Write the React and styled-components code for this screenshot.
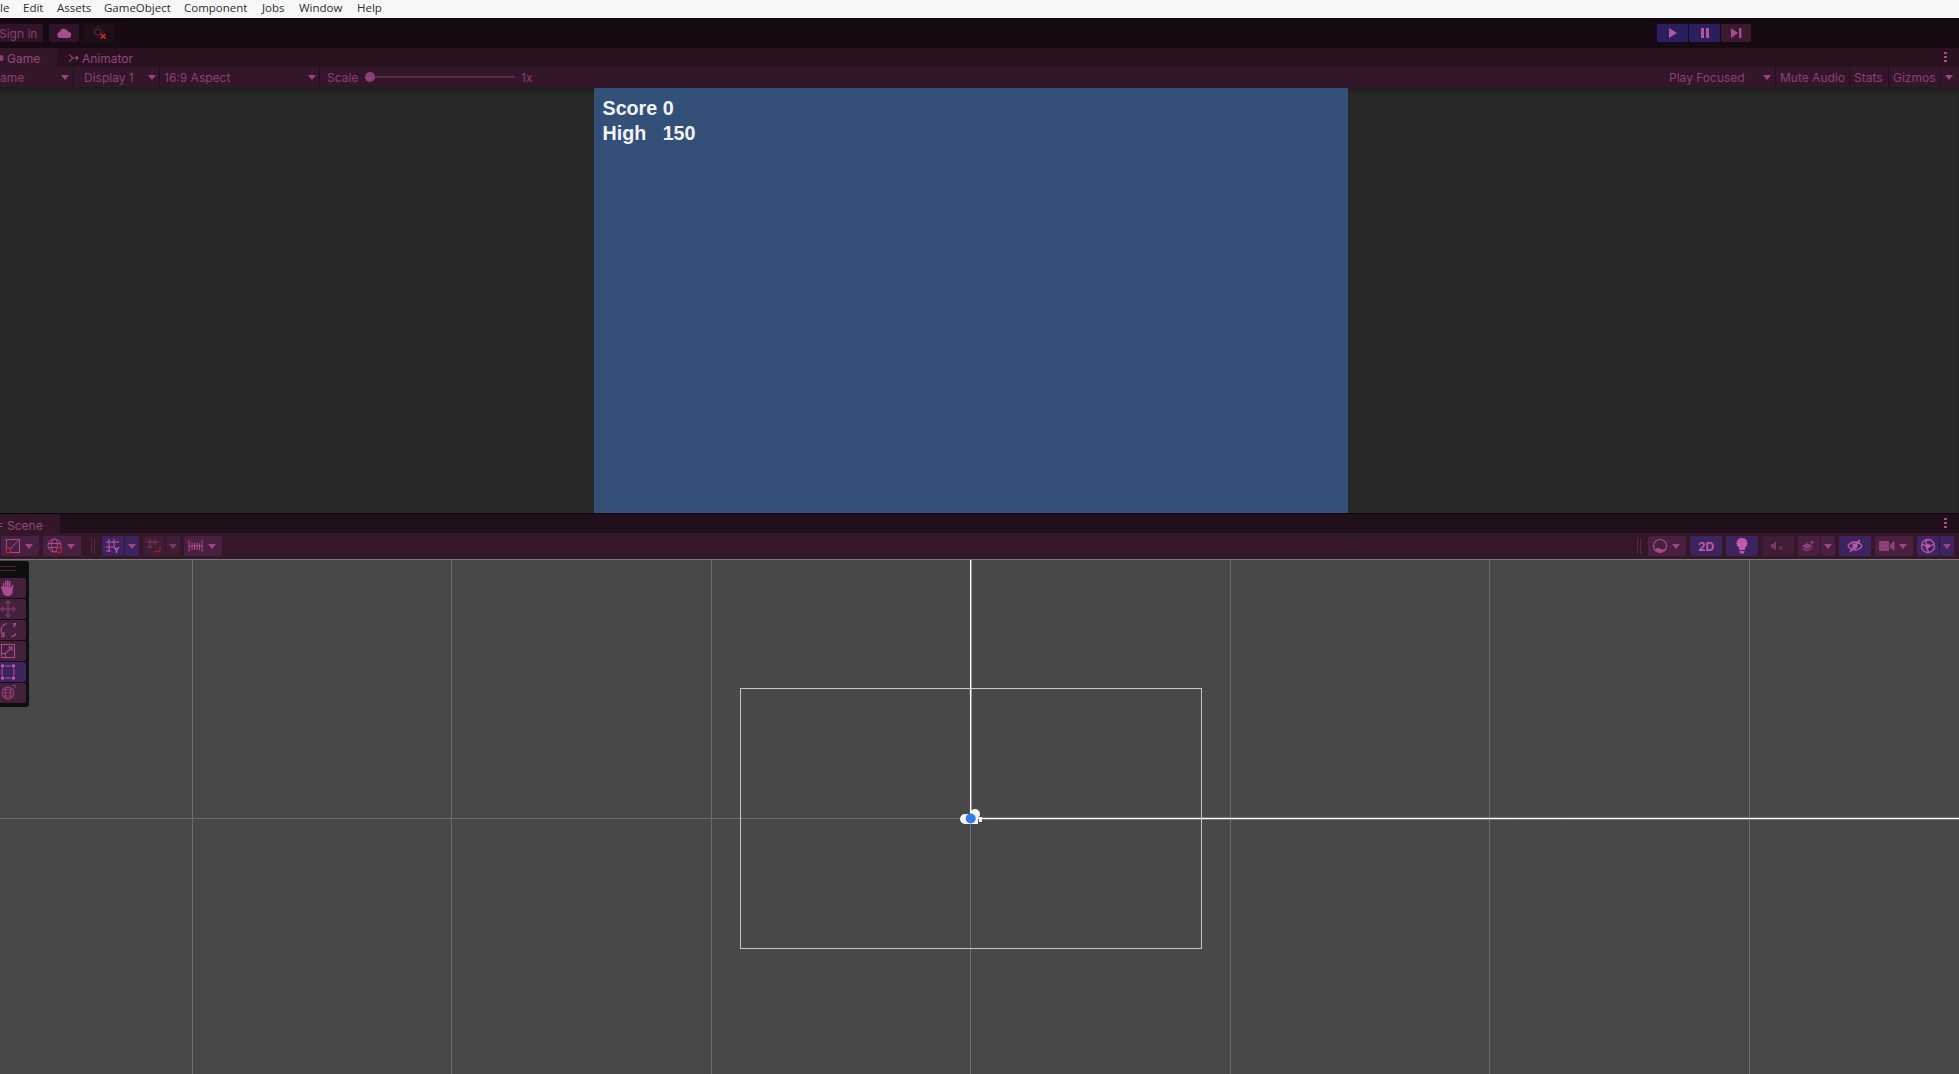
import React from "react";
import styled, { createGlobalStyle } from "styled-components";

const PINK = "#a84c8e";
const PINK_DIM = "#7a3a66";
const RED = "#d02a2a";

const Global = createGlobalStyle`
  html, body { margin: 0; padding: 0; background: #484848; }
  #root { width: 1959px; height: 1074px; overflow: hidden; }
`;

const Page = styled.div`
  width: 1959px; height: 1074px; overflow: hidden;
  display: flex; flex-direction: column;
  font-family: Inter, "Liberation Sans", sans-serif; font-size: 12px;
  color: ${PINK};
`;

const MenuBar = styled.div`
  height: 15px; padding-bottom: 3px; background: #f8f7f8; flex: none;
  display: flex; align-items: center;
  font-family: "Open Sans", "Noto Sans", sans-serif; font-size: 11.5px; color: #2c2c2c;
  overflow: hidden;
`;
const MenuItem = styled.span`
  flex: none; width: ${p => p.$w}px;
`;

const MainToolbar = styled.div`
  height: 30px; flex: none; background: #170a12;
  display: flex; align-items: center;
`;
const TopButton = styled.div`
  height: 18px; width: ${p => p.$w}px; margin-left: ${p => p.$ml || 0}px; flex: none;
  background: ${p => p.$bg || "#2f1326"};
  display: flex; align-items: center; justify-content: ${p => p.$start ? "flex-start" : "center"};
  border-radius: 1px; color: #8d4077; overflow: hidden; white-space: nowrap;
`;
const Clipped = styled.span` margin-left: -1px; `;

const TabBar = styled.div`
  height: ${p => p.$h}px; flex: none; background: ${p => p.$bg};
  display: flex; align-items: stretch; position: relative;
`;
const Tab = styled.div`
  width: ${p => p.$w}px; flex: none; display: flex; align-items: center; gap: 3px;
  background: ${p => p.$active ? "#331628" : "transparent"};
  padding: ${p => p.$pt || 0}px 0 0 ${p => p.$pl || 0}px; box-sizing: border-box;
  border-top-right-radius: 2px; color: #974781; white-space: nowrap;
  font-size: 12px;
`;
const Kebab = styled.svg` position: absolute; right: 12px; top: ${p => p.$top}px; `;

const GameToolbar = styled.div`
  height: 21px; flex: none; background: #33162a; display: flex; align-items: center;
  border-bottom: 1px solid #1e1e1e; box-sizing: border-box;
`;
const Cell = styled.div`
  width: ${p => p.$w}px; flex: none; box-sizing: border-box; height: 100%;
  display: flex; align-items: center; justify-content: space-between;
  padding: 0 ${p => p.$pr ?? 5}px 0 ${p => p.$pl ?? 5}px;
  border-right: ${p => p.$line ? "1px solid #230e1c" : "none"};
  color: #8d4077; white-space: nowrap; overflow: hidden;
`;
const Grow = styled.div` flex: 1; `;
const Arrow = styled.i`
  display: block; flex: none; width: 0; height: 0;
  border-left: 4px solid transparent; border-right: 4px solid transparent;
  border-top: 5px solid ${p => p.$c || "#9a4682"};
`;
const SliderWrap = styled.div`
  width: 150px; height: 2px; flex: none; position: relative;
  background: #5a2a4c;
`;
const Knob = styled.div`
  position: absolute; left: 0; top: -4px; width: 10px; height: 10px; border-radius: 50%; background: #8d4077;
`;

const GameView = styled.div`
  height: 425px; flex: none; background: #282828;
  display: flex; justify-content: center;
  box-shadow: inset 0 6px 6px -5px #161616;
`;
const GameCanvas = styled.div`
  width: 754px; margin-right: 18px; box-sizing: border-box; background: #325078;
  padding: 8px 9px; color: #f2f4f7;
  font-family: "Liberation Sans", Arial, sans-serif; font-weight: 700; font-size: 19.7px; line-height: 25px;
  white-space: pre;
`;

const Divider = styled.div` height: 1px; flex: none; background: #0e060b; `;

const SceneToolbar = styled.div`
  height: 27px; flex: none; background: #35172a; display: flex; align-items: center;
  border-bottom: 1px solid #7a7a7a; box-sizing: border-box; padding-left: 1px; padding-right: 5px;
`;
const ToolGroup = styled.div`
  display: flex; flex: none; gap: 1px; margin-left: ${p => p.$ml ?? 4}px;
`;
const ToolButton = styled.div`
  width: ${p => p.$w}px; height: 20px; flex: none; border-radius: 2px;
  background: ${p => p.$on ? "#3d2460" : p.$dim ? "#401c35" : "#4a2040"};
  display: flex; align-items: center; justify-content: ${p => p.$between ? "space-between" : "center"};
  padding: 0 ${p => p.$between ? 6 : 0}px 0 ${p => p.$between ? 4 : 0}px; box-sizing: border-box;
  font-weight: 700; font-size: 12px; color: #c05aa8;
`;
const Grip = styled.div`
  width: 4px; height: 16px; flex: none; margin-left: ${p => p.$ml}px; box-sizing: border-box;
  border-left: 1px solid #54284a; border-right: 1px solid #54284a;
`;

const SceneView = styled.div`
  flex: 1; position: relative; background: #484848; overflow: hidden;
`;
const SceneDrawing = styled.svg` display: block; `;
const ToolsOverlay = styled.div`
  position: absolute; left: 0; top: 1px; width: 29px; height: 146px; box-sizing: border-box;
  background: #0f0f0f; border-radius: 0 3px 3px 0;
  display: flex; flex-direction: column; gap: 1px; padding: 0 3px 4px 0;
`;
const Handle = styled.div`
  height: 16px; flex: none; display: flex; flex-direction: column;
  gap: 3px; padding: 5px 10px 0 0; box-sizing: border-box;
`;
const HandleLine = styled.div` height: 1px; background: #4a2540; `;
const OverlayButton = styled.div`
  height: 20px; flex: none; background: ${p => p.$on ? "#3d2460" : "#44203a"};
  display: flex; align-items: center; border-radius: 0 2px 2px 0;
`;

const Ico = ({ children, w = 16, h = 16, vb = "0 0 16 16", c = PINK, sw = 1 }) => (
  <svg width={w} height={h} viewBox={vb} fill="none" stroke={c} strokeWidth={sw}>{children}</svg>
);

const menu = [["le", 23], ["Edit", 34], ["Assets", 47], ["GameObject", 80], ["Component", 78], ["Jobs", 37], ["Window", 58], ["Help", 40]];

const bigGrid = [192.5, 451.5, 711.5, 970.5, 1230.5, 1489.5, 1749.5];
const fine = Array.from({ length: 76 }, (_, i) => 10 + i * 25.95);

const KebabDots = ({ top }) => (
  <Kebab $top={top} width="3" height="10" viewBox="0 0 3 10"><path fill="#a84c8e" d="M0 0h3v2H0zM0 4h3v2H0zM0 8h3v2H0z" /></Kebab>
);

export default function App() {
  return (
    <Page>
      <Global />
      <MenuBar>
        {menu.map(([t, w]) => <MenuItem key={t} $w={w}>{t}</MenuItem>)}
      </MenuBar>

      <MainToolbar>
        <TopButton $w={43} $start><Clipped>Sign in</Clipped></TopButton>
        <TopButton $w={30} $ml={6}>
          <svg width="14" height="10" viewBox="0 0 14 10"><path fill="#a84c8e" d="M3 10a3 3 0 0 1-.5-5.9A4.5 4.5 0 0 1 11 3.6 3.2 3.2 0 0 1 11 10z" /></svg>
        </TopButton>
        <TopButton $w={30} $ml={5} $bg="#1f0e19">
          <svg width="16" height="14" viewBox="0 0 16 14" fill="none">
            <circle cx="7" cy="6" r="3" stroke="#5a2a4c" />
            <path d="M7 0v1.5M7 10.5V12M1 6h1.5M11.5 6H13M2.8 1.8l1 1M10.2 9.2l1 1M11.2 1.8l-1 1" stroke="#5a2a4c" />
            <path d="M10 8l4.5 4.5M14.5 8L10 12.5" stroke={RED} strokeWidth="1.6" />
          </svg>
        </TopButton>
        <Grow />
        <TopButton $w={31} $bg="#2b1e5e">
          <svg width="10" height="12" viewBox="0 0 10 12"><path fill="#b5559c" d="M1 1l8 5-8 5z" /></svg>
        </TopButton>
        <TopButton $w={31} $ml={1} $bg="#2b1e5e">
          <svg width="10" height="10" viewBox="0 0 10 10"><path fill="#b5559c" d="M1 0h3v10H1zM6 0h3v10H6z" /></svg>
        </TopButton>
        <TopButton $w={30} $ml={1} $bg="#3a1a2e">
          <svg width="11" height="10" viewBox="0 0 11 10"><path fill="#a84c8e" d="M0 0l7 5-7 5zM8 0h2.4v10H8z" /></svg>
        </TopButton>
        <TopButton $w={208} $bg="transparent" />
      </MainToolbar>

      <TabBar $h={19} $bg="#2a1120">
        <Tab $w={57} $active $pt={1}>
          <svg width="4" height="8" viewBox="0 0 4 8"><circle cx="0.5" cy="4" r="3" fill="#8d4077" /></svg>
          Game
        </Tab>
        <Tab $w={90} $pl={11} $pt={1}>
          <svg width="11" height="10" viewBox="0 0 11 10" fill="none" stroke="#974781" strokeWidth="1.1">
            <path d="M1 1l3.5 4L1 9M4.5 5H10M8 3l2 2-2 2" />
          </svg>
          Animator
        </Tab>
        <KebabDots top={4} />
      </TabBar>

      <GameToolbar>
        <Cell $w={74} $pl={0} $pr={4} $line><span>ame</span><Arrow /></Cell>
        <Cell $w={86} $pl={10} $pr={3} $line><span>Display 1</span><Arrow /></Cell>
        <Cell $w={160} $pl={4} $pr={3} $line><span>16:9 Aspect</span><Arrow /></Cell>
        <Cell $w={45} $pl={7} $pr={0}><span>Scale</span></Cell>
        <SliderWrap><Knob /></SliderWrap>
        <Cell $w={40} $pl={6}><span>1x</span></Cell>
        <Grow />
        <Cell $w={110} $pl={3} $pr={4} $line><span>Play Focused</span><Arrow /></Cell>
        <Cell $w={74} $pl={4} $pr={2} $line><span>Mute Audio</span></Cell>
        <Cell $w={39} $pl={4} $pr={2} $line><span>Stats</span></Cell>
        <Cell $w={52} $pl={4} $pr={2} $line><span>Gizmos</span></Cell>
        <Cell $w={18} $pl={4} $pr={4}><Arrow /></Cell>
      </GameToolbar>

      <GameView>
        <GameCanvas>{"Score 0\nHigh   150"}</GameCanvas>
      </GameView>

      <Divider />

      <TabBar $h={19} $bg="#220f1c">
        <Tab $w={60} $active $pt={3}>
          <svg width="4" height="9" viewBox="0 0 4 9" fill="none" stroke="#8d4077"><path d="M0 2.5h2.5M0 5.5h2.5" /></svg>
          Scene
        </Tab>
        <KebabDots top={4} />
      </TabBar>

      <SceneToolbar>
        <ToolButton $w={38} $between>
          <Ico>
            <rect x="1.5" y="1.5" width="13" height="13" />
            <path d="M2 14L14 2" />
            <circle cx="3.5" cy="12.5" r="2.5" stroke={RED} fill="#4a2040" />
          </Ico>
          <Arrow />
        </ToolButton>
        <ToolGroup>
          <ToolButton $w={38} $between>
            <Ico>
              <circle cx="7.5" cy="7.5" r="6.5" />
              <ellipse cx="7.5" cy="7.5" rx="3" ry="6.5" />
              <path d="M1 5.5h13M1 9.5h13" />
              <circle cx="12" cy="12" r="2.5" stroke={RED} fill="#4a2040" />
            </Ico>
            <Arrow />
          </ToolButton>
        </ToolGroup>
        <Grip $ml={10} />
        <ToolGroup $ml={7}>
          <ToolButton $w={22} $on>
            <Ico c="#c05aa8">
              <path d="M4 1v13M9 1v8M1 4h13M1 9h7M1 13h5" />
              <path d="M9 9l2.5 3 2.5-3M11.5 12v3" strokeWidth="1.5" />
            </Ico>
          </ToolButton>
          <ToolButton $w={14} $on><Arrow /></ToolButton>
        </ToolGroup>
        <ToolGroup>
          <ToolButton $w={22} $dim>
            <Ico c={PINK_DIM}>
              <path d="M4 1v9M9 1v6M1 4h12M1 9h5" />
              <path d="M14 9v2.5a2 2 0 0 1-2 2H9" stroke="#8a2626" strokeWidth="1.6" />
            </Ico>
          </ToolButton>
          <ToolButton $w={14} $dim><Arrow $c={PINK_DIM} /></ToolButton>
        </ToolGroup>
        <ToolGroup>
          <ToolButton $w={38} $between>
            <Ico w={15} h={14} vb="0 0 15 14">
              <path d="M1 1v12M14 1v12M1 7h13M4 3v8M6.5 4v7M9 3v8M11.5 4v7" />
            </Ico>
            <Arrow />
          </ToolButton>
        </ToolGroup>
        <Grow />
        <Grip $ml={0} />
        <ToolGroup $ml={7}>
          <ToolButton $w={38} $between>
            <Ico sw={1.2}>
              <circle cx="8" cy="8" r="6.5" />
              <path d="M3 11.5a6 6 0 0 0 10.5-1 5.5 5.5 0 0 1-7-1z" fill="#a84c8e" stroke="none" />
            </Ico>
            <Arrow />
          </ToolButton>
        </ToolGroup>
        <ToolGroup><ToolButton $w={32} $on>2D</ToolButton></ToolGroup>
        <ToolGroup>
          <ToolButton $w={32} $on>
            <svg width="12" height="16" viewBox="0 0 12 16"><path fill="#c05aa8" d="M6 0a5.2 5.2 0 0 1 3 9.6V12H3V9.6A5.2 5.2 0 0 1 6 0zM3.5 13h5v1l-1 1.5h-3L3.5 14z" /></svg>
          </ToolButton>
        </ToolGroup>
        <ToolGroup>
          <ToolButton $w={32} $dim>
            <svg width="14" height="12" viewBox="0 0 14 12" fill="none">
              <path fill="#7a3a66" d="M0 4h2l3-3v9L2 8H0z" />
              <path d="M8 6l4 4M12 6l-4 4" stroke="#7a3a66" />
            </svg>
          </ToolButton>
        </ToolGroup>
        <ToolGroup>
          <ToolButton $w={22}>
            <svg width="16" height="14" viewBox="0 0 16 14"><path fill="#8d4077" d="M1 7l5-3 6 3-6 3zM1 10l1.5-1 3.5 2 5-2.6 1 .6-6 3.5zM11 1l.7 1.8L13.5 3.5l-1.8.7L11 6l-.7-1.8L8.5 3.5l1.8-.7z" /></svg>
          </ToolButton>
          <ToolButton $w={14}><Arrow /></ToolButton>
        </ToolGroup>
        <ToolGroup>
          <ToolButton $w={32} $on>
            <svg width="16" height="14" viewBox="0 0 16 14" fill="none" stroke="#c05aa8" strokeWidth="1.3">
              <path d="M1 7s2.5-4 7-4 7 4 7 4-2.5 4-7 4-7-4-7-4z" />
              <circle cx="8" cy="7" r="2" fill="#c05aa8" />
              <path d="M3 13L13 1" strokeWidth="1.6" />
            </svg>
          </ToolButton>
        </ToolGroup>
        <ToolGroup>
          <ToolButton $w={38} $between>
            <svg width="16" height="10" viewBox="0 0 16 10"><path fill="#8d4077" d="M0 0h10v10H0zM11 3.5L15.5 0v10L11 6.5z" /></svg>
            <Arrow />
          </ToolButton>
        </ToolGroup>
        <ToolGroup>
          <ToolButton $w={22} $on>
            <Ico c="#c05aa8" sw={1.3}>
              <circle cx="8" cy="8" r="6.5" />
              <path d="M2 6c4 3 8 3 12 0M7 1.5c-2 4-1 9 2 13" />
              <circle cx="8" cy="8" r="1.5" fill="#c05aa8" />
            </Ico>
          </ToolButton>
          <ToolButton $w={14} $on><Arrow /></ToolButton>
        </ToolGroup>
      </SceneToolbar>

      <SceneView>
        <SceneDrawing width="1959" height="514" viewBox="0 0 1959 514">
          {fine.map(x => <line key={x} x1={x} x2={x} y1="0" y2="514" stroke="#4a4a4a" />)}
          {bigGrid.map(x => <line key={x} x1={x} x2={x} y1="0" y2="514" stroke="#6c6c6c" />)}
          <line x1="0" x2="970" y1="258.5" y2="258.5" stroke="#6c6c6c" />
          <rect x="740.5" y="128.5" width="461" height="260" fill="none" stroke="#c6c6c6" />
          <line x1="970.7" x2="970.7" y1="0" y2="258" stroke="#fff" strokeWidth="1.5" />
          <line x1="971" x2="1959" y1="258.5" y2="258.5" stroke="#fff" strokeWidth="1.5" />
          <circle cx="965" cy="259" r="5" fill="#f4f4f4" />
          <circle cx="975" cy="254" r="5" fill="#f4f4f4" />
          <rect x="964" y="254" width="14" height="10" fill="#f4f4f4" />
          <rect x="979" y="257" width="3" height="5" fill="#f4f4f4" />
          <circle cx="970.7" cy="258.5" r="5" fill="#2f7be8" />
        </SceneDrawing>

        <ToolsOverlay>
          <Handle><HandleLine /><HandleLine /></Handle>
          <OverlayButton>
            <svg width="16" height="18" viewBox="0 0 16 18"><path fill="#a84c8e" d="M2 7l1 .5V4h1.4v4H5V2h1.5v6H7V1.2h1.6V8h.5V2.2h1.5V9h.5l1-3.2 1.4.5L12.5 13a4 4 0 0 1-3.5 4H6a4 4 0 0 1-3-3L.8 8z" /></svg>
          </OverlayButton>
          <OverlayButton>
            <Ico w={16} h={18} vb="0 0 16 18" c="#7a3a66" sw={1.4}>
              <path d="M8 1v16M1 9h14" />
              <path d="M5.5 3.5L8 1l2.5 2.5M5.5 14.5L8 17l2.5-2.5M3.5 6.5L1 9l2.5 2.5M12.5 6.5L15 9l-2.5 2.5" />
            </Ico>
          </OverlayButton>
          <OverlayButton>
            <Ico w={16} h={18} vb="0 0 16 18" sw={1.2}>
              <path d="M4 15A7 7 0 0 1 7 2.5M11 15.5a7 7 0 0 0 3-13" />
              <path d="M4 11v4.5H1M14 6.5V2.5h2" />
            </Ico>
          </OverlayButton>
          <OverlayButton>
            <Ico sw={1.1}>
              <rect x="1.5" y="1.5" width="13" height="13" />
              <rect x="1.5" y="10.5" width="4" height="4" />
              <path d="M6 10l6-6M8 4h4v4" />
            </Ico>
          </OverlayButton>
          <OverlayButton $on>
            <svg width="16" height="16" viewBox="0 0 16 16">
              <path d="M5 2h6M5 14h6M2 5v6M14 5v6" stroke="#b5559c" />
              <path fill="#c05aa8" d="M1 .5h3v3H1zM12 .5h3v3h-3zM1 12.5h3v3H1zM12 12.5h3v3h-3z" />
            </svg>
          </OverlayButton>
          <OverlayButton>
            <Ico w={16} h={18} vb="0 0 16 18" c="#8d4077" sw={1.1}>
              <circle cx="8" cy="9" r="6" />
              <ellipse cx="8" cy="9" rx="2.6" ry="6" />
              <path d="M2 9h12M3 6h10M3 12h10M12 1.5h3v3" />
            </Ico>
          </OverlayButton>
        </ToolsOverlay>
      </SceneView>
    </Page>
  );
}
